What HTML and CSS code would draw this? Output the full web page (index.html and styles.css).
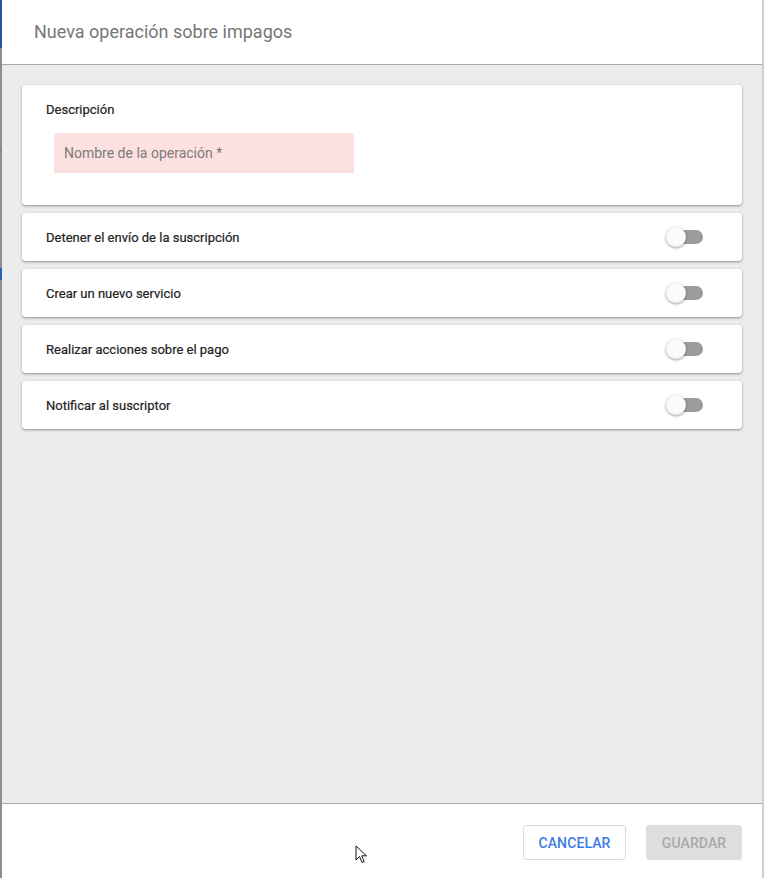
FILE: index.html
```html
<!DOCTYPE html>
<html lang="es">
<head>
<meta charset="utf-8">
<title>Nueva operación sobre impagos</title>
<link rel="stylesheet" href="styles.css">
</head>
<body>
<div class="screen">
  <div class="edge edge-left"></div>
  <div class="dialog">
    <header class="dialog-header">
      <h1 class="dialog-title">Nueva operación sobre impagos</h1>
    </header>
    <main class="dialog-body">
      <section class="card card-desc">
        <div class="card-label">Descripción</div>
        <div class="input-field">
          <span class="placeholder">Nombre de la operación *</span>
        </div>
      </section>
      <section class="card card-toggle">
        <span class="toggle-label">Detener el envío de la suscripción</span>
        <span class="switch"><span class="track"></span><span class="thumb"></span></span>
      </section>
      <section class="card card-toggle">
        <span class="toggle-label">Crear un nuevo servicio</span>
        <span class="switch"><span class="track"></span><span class="thumb"></span></span>
      </section>
      <section class="card card-toggle">
        <span class="toggle-label">Realizar acciones sobre el pago</span>
        <span class="switch"><span class="track"></span><span class="thumb"></span></span>
      </section>
      <section class="card card-toggle">
        <span class="toggle-label">Notificar al suscriptor</span>
        <span class="switch"><span class="track"></span><span class="thumb"></span></span>
      </section>
    </main>
    <footer class="dialog-footer">
      <button class="btn btn-cancel" type="button">CANCELAR</button>
      <button class="btn btn-save" type="button" disabled>GUARDAR</button>
    </footer>
  </div>
  <div class="edge edge-right"></div>
  <svg class="cursor" width="14" height="20" viewBox="0 0 14 20" aria-hidden="true">
    <path d="M1 1 L1 15 L4.5 11.5 L7 17.5 L9.2 16.6 L6.8 10.8 L11.5 10.8 Z" fill="#fff" stroke="#111" stroke-width="1" stroke-linejoin="round"/>
  </svg>
</div>
</body>
</html>
```

FILE: styles.css
```css
* { box-sizing: border-box; }
html, body { margin: 0; padding: 0; }
body {
  font-family: Roboto, "Noto Sans", "Liberation Sans", sans-serif;
  background: #8c8c8c;
}
.screen {
  position: relative;
  display: flex;
  width: 764px;
  height: 878px;
  overflow: hidden;
}
.edge { flex: 0 0 2px; }
.edge-left {
  background: linear-gradient(to bottom, #2b52a3 0, #2b52a3 48px, #8e8e8e 48px, #8e8e8e 150px, #7a7a7a 150px, #7a7a7a 151px, #8e8e8e 151px, #8e8e8e 268px, #2b5fc0 268px, #2b5fc0 280px, #8e8e8e 280px);
}
.edge-right {
  background: #cfcfcf;
}
.dialog {
  flex: 0 0 760px;
  display: flex;
  flex-direction: column;
  background: #fff;
}
.dialog-header {
  height: 65px;
  border-bottom: 1px solid #ababab;
  display: flex;
  align-items: center;
  padding: 0 32px;
}
.dialog-title {
  margin: 0;
  font-size: 18px;
  font-weight: 400;
  color: #777;
  position: relative;
  top: -1px;
}
.dialog-body {
  flex: 1;
  background: #ececec;
  padding: 20px 20px;
  display: flex;
  flex-direction: column;
  gap: 8px;
}
.card {
  background: #fff;
  border-radius: 4px;
  box-shadow: 0 1px 3px rgba(0, 0, 0, 0.32), 0 1px 1px rgba(0, 0, 0, 0.1);
}
.card-desc {
  height: 120px;
  padding: 17px 24px 0;
}
.card-label {
  font-size: 13px;
  color: #222;
  line-height: 16px;
  font-weight: 400;
  -webkit-text-stroke: 0.2px #222;
}
.input-field {
  margin-top: 15px;
  margin-left: 8px;
  width: 300px;
  height: 40px;
  background: #fde1e1;
  border-radius: 2px 2px 0 0;
  display: flex;
  align-items: center;
  padding-left: 10px;
}
.placeholder {
  font-size: 14px;
  color: #7a7a7a;
}
.card-toggle {
  height: 48px;
  display: flex;
  align-items: center;
  justify-content: space-between;
  padding: 0 39px 0 24px;
}
.toggle-label {
  font-size: 13px;
  color: #222;
  font-weight: 400;
  -webkit-text-stroke: 0.2px #222;
}
.switch {
  position: relative;
  width: 37px;
  height: 20px;
  display: block;
}
.track {
  position: absolute;
  right: 0;
  top: 3px;
  width: 34px;
  height: 14px;
  border-radius: 7px;
  background: #9b9b9b;
}
.thumb {
  position: absolute;
  left: 0;
  top: 0;
  width: 20px;
  height: 20px;
  border-radius: 50%;
  background: #fafafa;
  box-shadow: 0 1px 3px rgba(0, 0, 0, 0.4);
}
.dialog-footer {
  height: 75px;
  border-top: 1px solid #ababab;
  display: flex;
  justify-content: flex-end;
  align-items: flex-start;
  padding: 21px 20px 0;
  gap: 20px;
}
.btn {
  height: 35px;
  border-radius: 3px;
  font-family: Roboto, "Noto Sans", "Liberation Sans", sans-serif;
  font-size: 14px;
  font-weight: 500;
  letter-spacing: 0.1px;
  padding: 0;
  cursor: pointer;
}
.btn-cancel {
  width: 103px;
  background: #fff;
  border: 1px solid #dcdcdc;
  color: #3d7be6;
}
.btn-save {
  width: 96px;
  background: #dedede;
  border: none;
  color: #a9a9a9;
}
.cursor {
  position: absolute;
  left: 355px;
  top: 845px;
}
```
